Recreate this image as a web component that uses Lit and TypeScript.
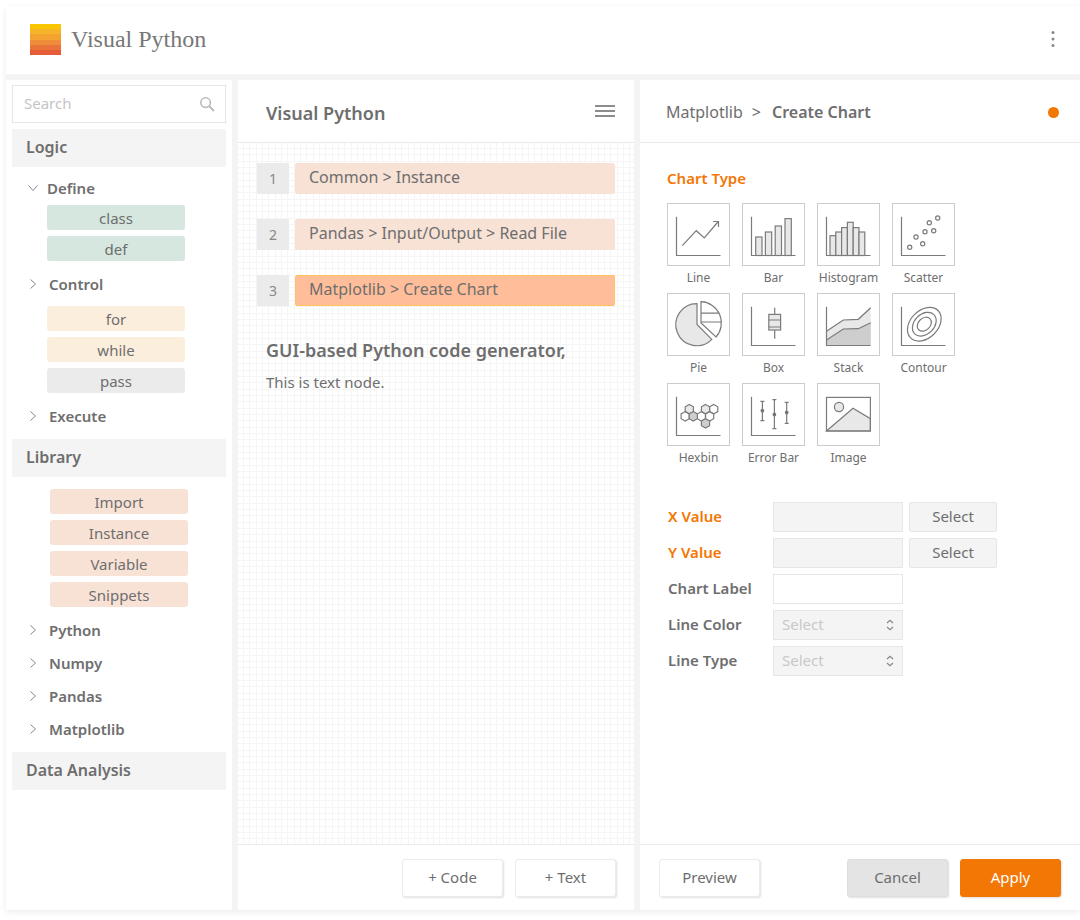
import { LitElement, html, svg, css } from "lit";
import type { SVGTemplateResult } from "lit";
import { customElement, property } from "lit/decorators.js";
import { classMap } from "lit/directives/class-map.js";

const axes = svg`<path d="M9.5 13.7V52.5H53.5" />`;

const hexagon = (x: number, y: number, tone: string) => svg`
  <path class=${tone} d=${`M${x} ${y - 4.7}l4.1 2.35v4.7l-4.1 2.35l-4.1-2.35v-4.7z`} />`;

const whisker = (x: number, top: number, bottom: number, dot: number) => svg`
  <path d=${`M${x} ${top}V${bottom}M${x - 2} ${top}h4M${x - 2} ${bottom}h4`} />
  <circle class="solid" cx=${x} cy=${dot} r="1.3" />`;

const glyphs: Record<string, SVGTemplateResult> = {
  Line: svg`${axes}<path d="M15.3 42.7L29.3 27.7L37.3 35L51.3 18.5M46 18.5H51.5V24" />`,
  Bar: svg`
    <rect class="light" x="13.7" y="34" width="6.3" height="18.5" />
    <rect class="light" x="23.4" y="29" width="6.3" height="23.5" />
    <rect class="light" x="33.2" y="23" width="6.3" height="29.5" />
    <rect class="light" x="43" y="15.6" width="6.3" height="36.9" />${axes}`,
  Histogram: svg`
    <rect class="light" x="13" y="32.7" width="5.8" height="19.8" />
    <rect class="light" x="18.8" y="29" width="5.8" height="23.5" />
    <rect class="light" x="24.6" y="24.6" width="5.8" height="27.9" />
    <rect class="light" x="30.4" y="19.3" width="5.8" height="33.2" />
    <rect class="light" x="36.2" y="24.6" width="5.8" height="27.9" />
    <rect class="light" x="42" y="29" width="5.8" height="23.5" />${axes}`,
  Scatter: svg`${axes}${[
    [17.7, 44.3], [30.7, 40.7], [24, 34], [33, 28.7], [41.7, 27.7], [37.3, 19.7], [45.7, 15],
  ].map(([x, y]) => svg`<circle cx=${x} cy=${y} r="2.1" />`)}`,
  Pie: svg`
    <path class="light" d="M30 10.7A21 21 0 1 0 44.8 46.4L30 31.5Z" />
    <path d="M34 8.7A21.2 21.2 0 0 1 49 44L34 30ZM34 20.2H52.4M34 29H55" />`,
  Box: svg`${axes}
    <rect class="light" x="26.8" y="21.4" width="11.8" height="15.6" />
    <path d="M26.8 27H38.6M26.8 34H38.6M32.7 14.7V21.4M32.7 37V45.7" />`,
  Stack: svg`
    <path class="light flat" d="M9.5 38.3L26.3 27L41.3 26.3L53.7 14.7V52.5H9.5Z" />
    <path class="dark flat" d="M9.5 47L26.3 36L41.3 35.7L53.7 29.7V52.5H9.5Z" />
    <path d="M9.5 38.3L26.3 27L41.3 26.3L53.7 14.7M9.5 47L26.3 36L41.3 35.7L53.7 29.7" />${axes}`,
  Contour: svg`${axes}<g transform="rotate(-45 32.3 31.2)">
    <ellipse cx="32.3" cy="31.2" rx="19.4" ry="13.8" />
    <ellipse cx="32.3" cy="31.2" rx="13.6" ry="9.9" />
    <ellipse cx="32.3" cy="31.2" rx="7.9" ry="6" /></g>`,
  Hexbin: svg`${axes}${hexagon(22.3, 26.2, "light")}${hexagon(38.5, 26.2, "light")}${hexagon(46.7, 26.2, "")}
    ${hexagon(18.2, 33.3, "")}${hexagon(34.4, 33.3, "")}${hexagon(42.6, 33.3, "")}
    ${hexagon(26.3, 33.3, "dark")}${hexagon(38.5, 40.4, "dark")}`,
  "Error Bar": svg`${axes}${whisker(20.4, 18.3, 37.7, 27.7)}${whisker(32.4, 16.7, 45.7, 31.5)}${whisker(44.7, 19.3, 40.3, 29.5)}`,
  Image: svg`
    <path class="light" d="M9.5 48L36 25.3L53.4 35.7V48Z" />
    <circle class="light" cx="22" cy="24" r="4.6" />
    <rect x="9.5" y="14.4" width="43.9" height="33.6" />`,
};

const controls = css`
  :host {
    box-sizing: border-box;
    font: 400 16px/24px "Noto Sans", "Open Sans", sans-serif;
    color: #6e6e6e;
  }
  * { box-sizing: border-box; }
  h1, h2, h3, p, ul, ol { margin: 0; padding: 0; font: inherit; }
  ul, ol { list-style: none; }
  button, input, select { font: inherit; color: inherit; margin: 0; }
  button { cursor: pointer; padding: 0; border: 0; background: none; }
  svg { display: block; }
`;

@customElement("vp-sidebar")
class Sidebar extends LitElement {
  static styles = [controls, css`
    :host { display: block; padding: 5px 6px; background: #fff; }
    .search {
      display: flex; align-items: center; height: 38px; margin-bottom: 6px;
      padding: 0 10px 0 11px; border: 1px solid #e6e6e6;
    }
    .search input { flex: 1; min-width: 0; padding: 0 0 2px; border: 0; outline: 0; font-size: 15px; background: none; }
    .search input::placeholder { color: #c4c4c4; opacity: 1; }
    .search svg { fill: none; stroke: #bbb; }
    .heading { padding: 0 14px 2px; font-weight: 600; line-height: 36px; background: #f4f4f4; }
    .tree { padding: 6px 0 7px; }
    .branch {
      display: flex; align-items: center; gap: 9px; width: 100%; height: 33px;
      padding-left: 14px; font-size: 15px; font-weight: 600; text-align: left;
    }
    .branch[aria-expanded="true"] { height: 32px; gap: 7px; padding-bottom: 3px; }
    .branch svg { fill: none; stroke: #888; }
    .pills { display: grid; gap: 6px; width: 138px; margin: 6px 0 6px 35px; }
    .pills.open { margin-top: 0; }
    .pills.base { margin-left: 38px; }
    .pill { display: block; width: 100%; height: 25px; border-radius: 3px; font-size: 15px; line-height: 24px; }
    .green { background: #d5e7de; }
    .cream { background: #fceedd; }
    .gray { background: #ebebeb; }
    .peach { background: #f8e2d6; }
  `];

  branch(label: string, open = false) {
    return html`<button class="branch" aria-expanded=${open}>
      <svg width="14" height="14" viewBox="0 0 14 14" aria-hidden="true">
        <path d=${open ? "M2.5 4.5L7 9.5L11.5 4.5" : "M4.5 2.5L9.5 7L4.5 11.5"} />
      </svg>${label}</button>`;
  }

  pills(items: string[][], kind = "") {
    return html`<ul class=${`pills ${kind}`}>
      ${items.map(([label, tone]) => html`<li><button class=${`pill ${tone}`}>${label}</button></li>`)}
    </ul>`;
  }

  render() {
    return html`
      <label class="search">
        <input type="search" placeholder="Search" aria-label="Search" />
        <svg width="16" height="16" viewBox="0 0 16 16" aria-hidden="true">
          <circle cx="6.6" cy="6.6" r="4.8" stroke-width="1.6" />
          <path d="M10 10L15 15" stroke-width="2" />
        </svg>
      </label>
      <h2 class="heading">Logic</h2>
      <div class="tree">
        ${this.branch("Define", true)}
        ${this.pills([["class", "green"], ["def", "green"]], "open")}
        ${this.branch("Control")}
        ${this.pills([["for", "cream"], ["while", "cream"], ["pass", "gray"]])}
        ${this.branch("Execute")}
      </div>
      <h2 class="heading">Library</h2>
      <div class="tree">
        ${this.pills([["Import", "peach"], ["Instance", "peach"], ["Variable", "peach"], ["Snippets", "peach"]], "base")}
        ${["Python", "Numpy", "Pandas", "Matplotlib"].map((name) => this.branch(name))}
      </div>
      <h2 class="heading">Data Analysis</h2>`;
  }
}

const panel = css`
  :host { display: flex; flex-direction: column; min-width: 0; background: #fff; }
  .bar {
    display: flex; align-items: center; justify-content: space-between;
    height: 63px; padding: 0 19px 0 28px; border-bottom: 1px solid #e9e9e9;
  }
  .foot { display: flex; gap: 12px; height: 66px; padding: 14px 19px 0; border-top: 1px solid #e9e9e9; }
  .action {
    width: 101px; height: 38px; padding-bottom: 3px; border: 1px solid #ececec; border-radius: 3px;
    background: #fff; box-shadow: 1px 1px 2px rgba(0, 0, 0, 0.13); font-size: 15px;
  }
`;

@customElement("vp-board")
class Board extends LitElement {
  static styles = [controls, panel, css`
    .title { padding-top: 4px; font-size: 18px; font-weight: 600; }
    .canvas {
      --line: #f5f5f5;
      flex: 1; padding: 20px 19px; background-size: 19px 19px;
      background-image:
        linear-gradient(90deg, transparent 5px, var(--line) 5px, var(--line) 6px, transparent 6px, transparent 11px,
          var(--line) 11px, var(--line) 12px, transparent 12px, transparent 18px, var(--line) 18px),
        linear-gradient(transparent 5px, var(--line) 5px, var(--line) 6px, transparent 6px, transparent 11px,
          var(--line) 11px, var(--line) 12px, transparent 12px, transparent 18px, var(--line) 18px);
    }
    .steps { display: grid; gap: 25px; }
    .step { display: flex; gap: 6px; }
    .number { width: 32px; font-size: 14px; line-height: 31px; text-align: center; color: #888; background: #ebebeb; }
    .block {
      flex: 1; height: 31px; padding: 0 13px 3px; border: 1px solid #f8e2d6; border-radius: 2px;
      text-align: left; background: #f8e2d6;
    }
    .block.active { border-color: #ffc55c; background: #ffbe99; }
    .lead { margin: 31px 9px 7px; font-size: 18px; font-weight: 600; line-height: 26px; }
    .note { margin: 0 9px; font-size: 15px; }
    .foot { justify-content: flex-end; padding-right: 18px; }
  `];

  render() {
    return html`
      <header class="bar">
        <h2 class="title">Visual Python</h2>
        <button aria-label="Menu">
          <svg width="20" height="14" viewBox="0 0 20 14" stroke="#8c8c8c" stroke-width="2">
            <path d="M0 2H20M0 7H20M0 12H20" />
          </svg>
        </button>
      </header>
      <div class="canvas">
        <ol class="steps">
          ${["Common > Instance", "Pandas > Input/Output > Read File", "Matplotlib > Create Chart"].map(
            (label, i) => html`<li class="step">
              <span class="number">${i + 1}</span>
              <button class=${classMap({ block: true, active: i === 2 })}>${label}</button>
            </li>`,
          )}
        </ol>
        <h3 class="lead">GUI-based Python code generator,</h3>
        <p class="note">This is text node.</p>
      </div>
      <footer class="foot">
        <button class="action">+ Code</button>
        <button class="action">+ Text</button>
      </footer>`;
  }
}

@customElement("vp-chart-type")
class ChartType extends LitElement {
  @property() name = "";

  static styles = [controls, css`
    :host { display: block; }
    .type { display: flex; flex-direction: column; align-items: center; gap: 3px; width: 63px; }
    .frame { border: 1px solid #ccc; }
    .frame svg { margin: -1px; fill: none; stroke: #7b7b7b; stroke-width: 1.2; }
    .light { fill: #e8e8e8; }
    .dark { fill: #cecece; }
    .flat { stroke: none; }
    .solid { fill: #6b6b6b; }
    .name { font-size: 12px; line-height: 18px; white-space: nowrap; }
  `];

  render() {
    return html`<button class="type">
      <span class="frame"><svg width="63" height="63" viewBox="0 0 63 63" aria-hidden="true">${glyphs[this.name]}</svg></span>
      <span class="name">${this.name}</span>
    </button>`;
  }
}

@customElement("vp-inspector")
class Inspector extends LitElement {
  static styles = [controls, panel, css`
    .bar { padding: 2px 21px 0 26px; }
    .crumbs { display: flex; gap: 9px; }
    .here { margin-left: 2px; font-weight: 600; }
    .dot { width: 11px; height: 11px; border-radius: 50%; background: #f37704; }
    .body { flex: 1; padding: 23px 27px; }
    .section { font-size: 15px; font-weight: 600; color: #f37704; }
    .types { display: grid; grid-template-columns: repeat(4, 63px); gap: 6px 12px; margin: 13px 0 35px; }
    .form { display: grid; grid-template-columns: 100px 130px 88px; gap: 6px; align-items: center; }
    .caption { grid-column: 1; padding: 0 0 2px 1px; font-size: 15px; font-weight: 600; white-space: nowrap; }
    .caption.required { color: #f37704; }
    .field {
      grid-column: 2; width: 100%; height: 30px; padding: 0 8px;
      border: 1px solid #e6e6e6; border-radius: 0; background: #fff;
    }
    .muted { background: #f4f4f4; }
    .pick { height: 30px; padding-bottom: 3px; border: 1px solid #e6e6e6; border-radius: 2px; background: #f4f4f4; font-size: 15px; }
    .choice { grid-column: 2; display: grid; align-items: center; }
    .choice > * { grid-area: 1 / 1; }
    .choice select { appearance: none; padding-bottom: 2px; color: #c8c8c8; font-size: 15px; }
    .choice svg { justify-self: end; margin-right: 9px; pointer-events: none; fill: none; stroke: #888; stroke-width: 1.2; }
    .spacer { flex: 1; }
    .cancel { background: #e4e4e4; border-color: #dedede; }
    .apply { color: #fff; background: #f37704; border-color: #f37704; }
  `];

  render() {
    return html`
      <header class="bar">
        <div class="crumbs"><span>Matplotlib</span><span>&gt;</span><h2 class="here">Create Chart</h2></div>
        <span class="dot"></span>
      </header>
      <div class="body">
        <h3 class="section">Chart Type</h3>
        <div class="types">
          ${Object.keys(glyphs).map((name) => html`<vp-chart-type name=${name}></vp-chart-type>`)}
        </div>
        <div class="form">
          ${["X", "Y"].map((axis) => html`
            <label class="caption required" for=${axis}>${axis} Value</label>
            <input class="field muted" id=${axis} />
            <button class="pick">Select</button>`)}
          <label class="caption" for="label">Chart Label</label>
          <input class="field" id="label" />
          ${["Line Color", "Line Type"].map((name) => html`
            <label class="caption" for=${name.slice(5)}>${name}</label>
            <div class="choice">
              <select class="field muted" id=${name.slice(5)}><option>Select</option></select>
              <svg width="8" height="12" viewBox="0 0 8 12" aria-hidden="true">
                <path d="M1 4L4 1.2L7 4M1 8L4 10.8L7 8" />
              </svg>
            </div>`)}
        </div>
      </div>
      <footer class="foot">
        <button class="action">Preview</button>
        <span class="spacer"></span>
        <button class="action cancel">Cancel</button>
        <button class="action apply">Apply</button>
      </footer>`;
  }
}

@customElement("app-root")
class AppRoot extends LitElement {
  static styles = [controls, css`
    :host { display: flex; min-height: 100vh; padding: 6px 0 10px 6px; background: #fff; }
    .window {
      flex: 1; min-width: 0; display: grid; grid-template-rows: 68px 1fr; gap: 6px;
      background: #f4f4f4; box-shadow: 0 2px 6px rgba(0, 0, 0, 0.08);
    }
    .top { display: flex; align-items: center; gap: 10px; padding: 0 24px 2px; background: #fff; }
    .brand { flex: 1; font: 24px/32px "Liberation Serif", serif; color: #777; }
    .columns { display: grid; grid-template-columns: 226px minmax(0, 396fr) minmax(0, 440fr); gap: 6px; }
  `];

  render() {
    const stripes = ["#f9c600", "#f6b42a", "#f4a331", "#ee8c39", "#ea7339", "#e65c39"];
    return html`<div class="window">
      <header class="top">
        <svg width="31" height="31" viewBox="0 0 31 31" shape-rendering="crispEdges" aria-hidden="true">
          ${stripes.map((color, i) => svg`<rect y=${i * 5.17} width="31" height="5.2" fill=${color} />`)}
        </svg>
        <h1 class="brand">Visual Python</h1>
        <button aria-label="More">
          <svg width="6" height="18" viewBox="0 0 6 18" fill="#888">
            <circle cx="3" cy="2.4" r="1.5" /><circle cx="3" cy="9" r="1.5" /><circle cx="3" cy="15.6" r="1.5" />
          </svg>
        </button>
      </header>
      <main class="columns">
        <vp-sidebar></vp-sidebar>
        <vp-board></vp-board>
        <vp-inspector></vp-inspector>
      </main>
    </div>`;
  }
}
